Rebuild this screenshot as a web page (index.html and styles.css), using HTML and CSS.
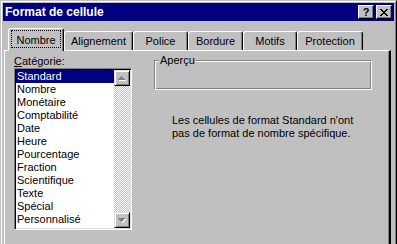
FILE: index.html
```html
<!DOCTYPE html>
<html>
<head>
    <title>Format de cellule</title>
    <link rel="stylesheet" href="styles.css">
</head>
<body>
    <div class="window">
        <div class="titlebar">
            <span class="title">Format de cellule</span>
            <div class="caption-buttons">
                <span class="cap-btn help">?</span>
                <span class="cap-btn close">
                    <svg width="8" height="7" viewBox="0 0 8 7" shape-rendering="crispEdges">
                        <path d="M0 0h2v1h-2z M1 1h2v1h-2z M2 2h4v1h-4z M3 3h2v1h-2z M2 4h4v1h-4z M1 5h2v1h-2z M0 6h2v1h-2z M6 0h2v1h-2z M5 1h2v1h-2z M5 5h2v1h-2z M6 6h2v1h-2z" fill="#000"/>
                    </svg>
                </span>
            </div>
        </div>

        <div class="dialog">
            <div class="tabs">
                <div class="tab active w-nombre"><span class="focus">Nombre</span></div>
                <div class="tab w-align">Alignement</div>
                <div class="tab w-police">Police</div>
                <div class="tab w-bordure">Bordure</div>
                <div class="tab w-motifs">Motifs</div>
                <div class="tab w-protection">Protection</div>
            </div>

            <div class="panel">
                <div class="col-left">
                    <div class="label"><u>C</u>atégorie:</div>
                    <div class="listbox">
                        <ul class="items">
                            <li class="selected">Standard</li>
                            <li>Nombre</li>
                            <li>Monétaire</li>
                            <li>Comptabilité</li>
                            <li>Date</li>
                            <li>Heure</li>
                            <li>Pourcentage</li>
                            <li>Fraction</li>
                            <li>Scientifique</li>
                            <li>Texte</li>
                            <li>Spécial</li>
                            <li>Personnalisé</li>
                        </ul>
                        <div class="scrollbar">
                            <div class="sb-btn">
                                <svg width="8" height="5" viewBox="0 0 8 5" shape-rendering="crispEdges">
                                    <path d="M4 1h1v1h-1z M3 2h3v1h-3z M2 3h5v1h-5z M1 4h7v1h-7z" fill="#fff"/>
                                    <path d="M3 0h1v1h-1z M2 1h3v1h-3z M1 2h5v1h-5z M0 3h7v1h-7z" fill="#808080"/>
                                </svg>
                            </div>
                            <div class="sb-track"></div>
                            <div class="sb-btn">
                                <svg width="8" height="5" viewBox="0 0 8 5" shape-rendering="crispEdges">
                                    <path d="M1 1h7v1h-7z M2 2h5v1h-5z M3 3h3v1h-3z M4 4h1v1h-1z" fill="#fff"/>
                                    <path d="M0 0h7v1h-7z M1 1h5v1h-5z M2 2h3v1h-3z M3 3h1v1h-1z" fill="#808080"/>
                                </svg>
                            </div>
                        </div>
                    </div>
                </div>

                <div class="col-right">
                    <div class="group">
                        <span class="group-label">Aperçu</span>
                    </div>
                    <p class="desc">Les cellules de format Standard n'ont<br>pas de format de nombre spécifique.</p>
                </div>
            </div>
        </div>
    </div>
</body>
</html>
```

FILE: styles.css
```css
body {
    margin: 0;
    background-color: #c0c0c0;
    font-family: "Liberation Sans", Arial, sans-serif;
    font-size: 11px;
    color: #000;
    overflow: hidden;
}
.window {
    width: 397px;
    height: 290px;
    box-sizing: border-box;
    background-color: #c0c0c0;
    border: 1px solid;
    border-color: #c0c0c0 #000 #000 #c0c0c0;
    box-shadow: inset 1px 1px #fff, inset -1px -1px #808080;
    padding: 2px;
}
.titlebar {
    height: 18px;
    background-color: #000080;
    color: #fff;
    display: flex;
    align-items: center;
    justify-content: space-between;
    padding: 0 2px;
}
.title {
    font-weight: bold;
    font-size: 12px;
    line-height: 18px;
}
.caption-buttons {
    display: flex;
    gap: 2px;
}
.cap-btn {
    width: 16px;
    height: 14px;
    box-sizing: border-box;
    background-color: #c0c0c0;
    border: 1px solid;
    border-color: #fff #000 #000 #fff;
    box-shadow: inset -1px -1px #808080;
    display: flex;
    align-items: center;
    justify-content: center;
    color: #000;
}
.help {
    font-weight: bold;
    font-size: 11px;
    line-height: 12px;
}
.dialog {
    padding: 7px 0 0 1px;
}
.tabs {
    display: flex;
    align-items: flex-end;
    height: 22px;
    margin-left: 4px;
}
.tab {
    box-sizing: border-box;
    height: 19px;
    border: 1px solid #fff;
    border-bottom: none;
    border-right-color: #000;
    border-radius: 3px 3px 0 0;
    box-shadow: inset -1px 0 #808080;
    text-align: center;
    padding-top: 3px;
    line-height: 13px;
}
.tab.active {
    position: relative;
    z-index: 1;
    height: 23px;
    margin-bottom: -1px;
    background-color: #c0c0c0;
    padding-top: 1px;
}
.focus {
    display: inline-block;
    border: 1px dotted #000;
    padding: 3px 4px 0;
}
.w-nombre { width: 56px; }
.w-align { width: 69px; }
.w-police { width: 55px; }
.w-bordure { width: 55px; }
.w-motifs { width: 54px; }
.w-protection { width: 66px; }
.panel {
    width: 387px;
    height: 220px;
    box-sizing: border-box;
    border-top: 1px solid #fff;
    border-left: 1px solid #fff;
    border-right: 2px solid #000;
    box-shadow: inset -1px 0 #808080;
    display: flex;
}
.col-left {
    margin-left: 9px;
    padding-top: 4px;
}
.label {
    line-height: 13px;
}
.listbox {
    width: 118px;
    height: 162px;
    box-sizing: border-box;
    border: 1px solid;
    border-color: #808080 #fff #fff #808080;
    box-shadow: inset 1px 1px #000, inset -1px -1px #dfdfdf;
    padding: 1px;
    background-color: #fff;
    display: flex;
}
.items {
    flex: 1;
    list-style: none;
    margin: 0;
    padding: 0;
}
.items li {
    height: 13px;
    line-height: 13px;
    padding-left: 1px;
    white-space: nowrap;
}
.items li.selected {
    background-color: #000080;
    color: #fff;
}
.scrollbar {
    width: 16px;
    display: flex;
    flex-direction: column;
}
.sb-btn {
    height: 16px;
    box-sizing: border-box;
    background-color: #c0c0c0;
    border: 1px solid;
    border-color: #dfdfdf #000 #000 #dfdfdf;
    box-shadow: inset 1px 1px #fff, inset -1px -1px #808080;
    display: flex;
    align-items: center;
    justify-content: center;
}
.sb-track {
    flex: 1;
    background: repeating-conic-gradient(#c0c0c0 0 25%, #fff 0 50%) 0 0 / 2px 2px;
}
.col-right {
    margin-left: 22px;
    padding-top: 9px;
}
.group {
    position: relative;
    width: 218px;
    height: 30px;
    box-sizing: border-box;
    border: 1px solid;
    border-color: #808080 #fff #fff #808080;
    box-shadow: inset 1px 1px #fff, inset -1px -1px #808080;
}
.group-label {
    position: absolute;
    top: -7px;
    left: 4px;
    padding: 0 1px;
    background-color: #c0c0c0;
    line-height: 13px;
}
.desc {
    margin: 24px 0 0 18px;
    line-height: 13px;
}
```
